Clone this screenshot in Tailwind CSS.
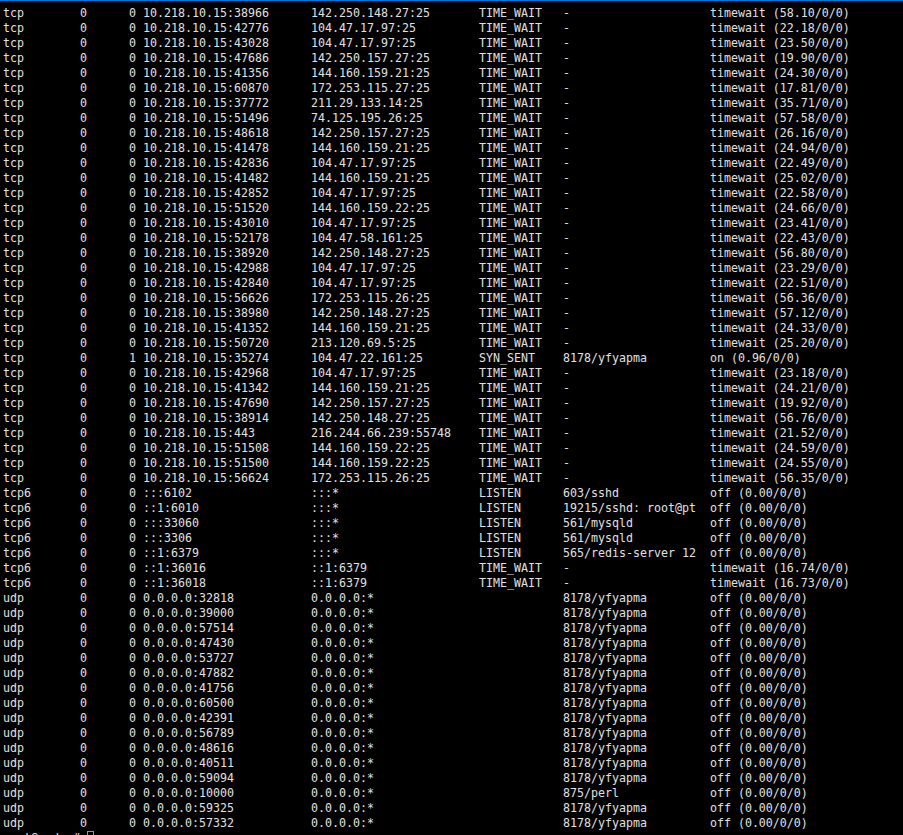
<!DOCTYPE html>
<html lang="en">
<head>
    <meta charset="UTF-8">
    <title>netstat</title>
    <script src="https://cdn.jsdelivr.net/npm/@tailwindcss/browser@4"></script>
</head>
<body class="bg-black h-[835px] overflow-hidden">
    <div class="h-px bg-[#0078d7]"></div>
    <div class="relative">
        <pre id="term" class="pl-[3px] pt-[5px] font-['DejaVu_Sans_Mono',monospace] text-[11.63px] leading-[15px] text-[#e0e0e0]"></pre>
        <span class="absolute left-[87px] top-[830px] w-[7px] h-[14px] border border-[#00ff00]"></span>
    </div>

    <script>
        const local = '10.218.10.15:';
        const rows = [
            ['tcp', 0, local + '38966', '142.250.148.27:25', 'TIME_WAIT', '-', 'timewait (58.10/0/0)'],
            ['tcp', 0, local + '42776', '104.47.17.97:25', 'TIME_WAIT', '-', 'timewait (22.18/0/0)'],
            ['tcp', 0, local + '43028', '104.47.17.97:25', 'TIME_WAIT', '-', 'timewait (23.50/0/0)'],
            ['tcp', 0, local + '47686', '142.250.157.27:25', 'TIME_WAIT', '-', 'timewait (19.90/0/0)'],
            ['tcp', 0, local + '41356', '144.160.159.21:25', 'TIME_WAIT', '-', 'timewait (24.30/0/0)'],
            ['tcp', 0, local + '60870', '172.253.115.27:25', 'TIME_WAIT', '-', 'timewait (17.81/0/0)'],
            ['tcp', 0, local + '37772', '211.29.133.14:25', 'TIME_WAIT', '-', 'timewait (35.71/0/0)'],
            ['tcp', 0, local + '51496', '74.125.195.26:25', 'TIME_WAIT', '-', 'timewait (57.58/0/0)'],
            ['tcp', 0, local + '48618', '142.250.157.27:25', 'TIME_WAIT', '-', 'timewait (26.16/0/0)'],
            ['tcp', 0, local + '41478', '144.160.159.21:25', 'TIME_WAIT', '-', 'timewait (24.94/0/0)'],
            ['tcp', 0, local + '42836', '104.47.17.97:25', 'TIME_WAIT', '-', 'timewait (22.49/0/0)'],
            ['tcp', 0, local + '41482', '144.160.159.21:25', 'TIME_WAIT', '-', 'timewait (25.02/0/0)'],
            ['tcp', 0, local + '42852', '104.47.17.97:25', 'TIME_WAIT', '-', 'timewait (22.58/0/0)'],
            ['tcp', 0, local + '51520', '144.160.159.22:25', 'TIME_WAIT', '-', 'timewait (24.66/0/0)'],
            ['tcp', 0, local + '43010', '104.47.17.97:25', 'TIME_WAIT', '-', 'timewait (23.41/0/0)'],
            ['tcp', 0, local + '52178', '104.47.58.161:25', 'TIME_WAIT', '-', 'timewait (22.43/0/0)'],
            ['tcp', 0, local + '38920', '142.250.148.27:25', 'TIME_WAIT', '-', 'timewait (56.80/0/0)'],
            ['tcp', 0, local + '42988', '104.47.17.97:25', 'TIME_WAIT', '-', 'timewait (23.29/0/0)'],
            ['tcp', 0, local + '42840', '104.47.17.97:25', 'TIME_WAIT', '-', 'timewait (22.51/0/0)'],
            ['tcp', 0, local + '56626', '172.253.115.26:25', 'TIME_WAIT', '-', 'timewait (56.36/0/0)'],
            ['tcp', 0, local + '38980', '142.250.148.27:25', 'TIME_WAIT', '-', 'timewait (57.12/0/0)'],
            ['tcp', 0, local + '41352', '144.160.159.21:25', 'TIME_WAIT', '-', 'timewait (24.33/0/0)'],
            ['tcp', 0, local + '50720', '213.120.69.5:25', 'TIME_WAIT', '-', 'timewait (25.20/0/0)'],
            ['tcp', 0, local + '35274', '104.47.22.161:25', 'SYN_SENT', '8178/yfyapma', 'on (0.96/0/0)', 1],
            ['tcp', 0, local + '42968', '104.47.17.97:25', 'TIME_WAIT', '-', 'timewait (23.18/0/0)'],
            ['tcp', 0, local + '41342', '144.160.159.21:25', 'TIME_WAIT', '-', 'timewait (24.21/0/0)'],
            ['tcp', 0, local + '47690', '142.250.157.27:25', 'TIME_WAIT', '-', 'timewait (19.92/0/0)'],
            ['tcp', 0, local + '38914', '142.250.148.27:25', 'TIME_WAIT', '-', 'timewait (56.76/0/0)'],
            ['tcp', 0, local + '443', '216.244.66.239:55748', 'TIME_WAIT', '-', 'timewait (21.52/0/0)'],
            ['tcp', 0, local + '51508', '144.160.159.22:25', 'TIME_WAIT', '-', 'timewait (24.59/0/0)'],
            ['tcp', 0, local + '51500', '144.160.159.22:25', 'TIME_WAIT', '-', 'timewait (24.55/0/0)'],
            ['tcp', 0, local + '56624', '172.253.115.26:25', 'TIME_WAIT', '-', 'timewait (56.35/0/0)'],
            ['tcp6', 0, ':::6102', ':::*', 'LISTEN', '603/sshd', 'off (0.00/0/0)'],
            ['tcp6', 0, '::1:6010', ':::*', 'LISTEN', '19215/sshd: root@pt', 'off (0.00/0/0)'],
            ['tcp6', 0, ':::33060', ':::*', 'LISTEN', '561/mysqld', 'off (0.00/0/0)'],
            ['tcp6', 0, ':::3306', ':::*', 'LISTEN', '561/mysqld', 'off (0.00/0/0)'],
            ['tcp6', 0, '::1:6379', ':::*', 'LISTEN', '565/redis-server 12', 'off (0.00/0/0)'],
            ['tcp6', 0, '::1:36016', '::1:6379', 'TIME_WAIT', '-', 'timewait (16.74/0/0)'],
            ['tcp6', 0, '::1:36018', '::1:6379', 'TIME_WAIT', '-', 'timewait (16.73/0/0)'],
            ['udp', 0, '0.0.0.0:32818', '0.0.0.0:*', '', '8178/yfyapma', 'off (0.00/0/0)'],
            ['udp', 0, '0.0.0.0:39000', '0.0.0.0:*', '', '8178/yfyapma', 'off (0.00/0/0)'],
            ['udp', 0, '0.0.0.0:57514', '0.0.0.0:*', '', '8178/yfyapma', 'off (0.00/0/0)'],
            ['udp', 0, '0.0.0.0:47430', '0.0.0.0:*', '', '8178/yfyapma', 'off (0.00/0/0)'],
            ['udp', 0, '0.0.0.0:53727', '0.0.0.0:*', '', '8178/yfyapma', 'off (0.00/0/0)'],
            ['udp', 0, '0.0.0.0:47882', '0.0.0.0:*', '', '8178/yfyapma', 'off (0.00/0/0)'],
            ['udp', 0, '0.0.0.0:41756', '0.0.0.0:*', '', '8178/yfyapma', 'off (0.00/0/0)'],
            ['udp', 0, '0.0.0.0:60500', '0.0.0.0:*', '', '8178/yfyapma', 'off (0.00/0/0)'],
            ['udp', 0, '0.0.0.0:42391', '0.0.0.0:*', '', '8178/yfyapma', 'off (0.00/0/0)'],
            ['udp', 0, '0.0.0.0:56789', '0.0.0.0:*', '', '8178/yfyapma', 'off (0.00/0/0)'],
            ['udp', 0, '0.0.0.0:48616', '0.0.0.0:*', '', '8178/yfyapma', 'off (0.00/0/0)'],
            ['udp', 0, '0.0.0.0:40511', '0.0.0.0:*', '', '8178/yfyapma', 'off (0.00/0/0)'],
            ['udp', 0, '0.0.0.0:59094', '0.0.0.0:*', '', '8178/yfyapma', 'off (0.00/0/0)'],
            ['udp', 0, '0.0.0.0:10000', '0.0.0.0:*', '', '875/perl', 'off (0.00/0/0)'],
            ['udp', 0, '0.0.0.0:59325', '0.0.0.0:*', '', '8178/yfyapma', 'off (0.00/0/0)'],
            ['udp', 0, '0.0.0.0:57332', '0.0.0.0:*', '', '8178/yfyapma', 'off (0.00/0/0)'],
        ];

        // netstat columns, in characters
        const lines = rows.map(r =>
            r[0].padEnd(11) + '0'.padEnd(7) + (r[7] || 0) + ' ' +
            r[2].padEnd(24) + r[3].padEnd(24) + r[4].padEnd(12) + r[5].padEnd(21) + r[6]
        );
        document.getElementById('term').textContent = lines.join('\n') + '\nroot@amd:~# ';
    </script>
</body>
</html>
